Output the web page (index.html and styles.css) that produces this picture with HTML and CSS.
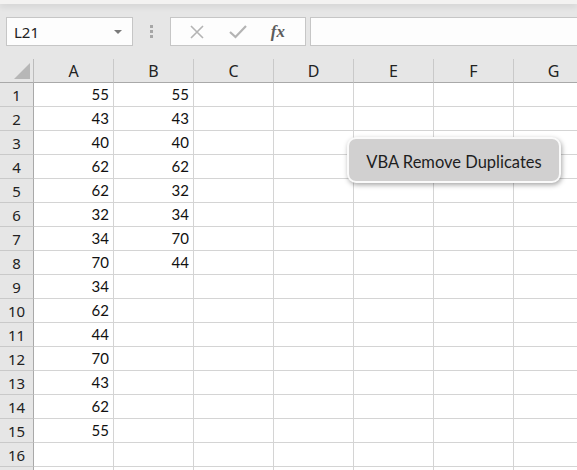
FILE: index.html
```html
<!DOCTYPE html>
<html lang="en">
<head>
    <meta charset="UTF-8">
    <meta name="viewport" content="width=device-width, initial-scale=1.0">
    <title>Remove Duplicates</title>
    <link rel="stylesheet" href="styles.css">
</head>
<body>
    <!-- Faixa superior da janela -->
    <div class="title-strip"></div>

    <!-- Caixa de nome e barra de fórmulas -->
    <div class="formula-row">
        <div class="name-box">
            <span>L21</span>
            <span class="caret"></span>
        </div>
        <div class="grip">
            <i></i><i></i><i></i>
        </div>
        <div class="fx-buttons">
            <svg width="16" height="16" viewBox="0 0 16 16">
                <path d="M2 2 L14 14 M14 2 L2 14" stroke="#b4b4b4" stroke-width="1.6" fill="none"/>
            </svg>
            <svg width="18" height="16" viewBox="0 0 18 16">
                <path d="M1 8 L6.5 13 L17 2" stroke="#b4b4b4" stroke-width="2.2" fill="none"/>
            </svg>
            <span class="fx">fx</span>
        </div>
        <div class="formula-input"></div>
    </div>

    <!-- Planilha -->
    <div class="sheet">
        <div class="grid" id="grid"></div>
        <button class="macro-btn">VBA Remove Duplicates</button>
    </div>

    <script>
        const colA = [55, 43, 40, 62, 62, 32, 34, 70, 34, 62, 44, 70, 43, 62, 55];
        const colB = [55, 43, 40, 62, 32, 34, 70, 44];
        const letters = ['A', 'B', 'C', 'D', 'E', 'F', 'G'];
        const grid = document.getElementById('grid');

        // linha de cabeçalho
        let html = '<div class="corner"><span class="tri"></span></div>';
        letters.forEach(l => html += `<div class="col-head">${l}</div>`);

        // a última linha fica cortada pela janela, sem número
        for (let r = 1; r <= 17; r++) {
            html += `<div class="row-head">${r < 17 ? r : ''}</div>`;
            letters.forEach((l, i) => {
                let v = '';
                if (i === 0 && colA[r - 1] !== undefined) v = colA[r - 1];
                if (i === 1 && colB[r - 1] !== undefined) v = colB[r - 1];
                html += `<div class="cell">${v}</div>`;
            });
        }
        grid.innerHTML = html;
    </script>
</body>
</html>
```

FILE: styles.css
```css
* {
    margin: 0;
    padding: 0;
    box-sizing: border-box;
}

body {
    background-color: #e6e6e6;
    font-family: 'Noto Sans', sans-serif;
    color: #222;
    overflow: hidden;
    width: 577px;
    height: 470px;
}

.title-strip {
    height: 4px;
    background-color: #f3f2f1;
    box-shadow: 0 2px 6px rgba(0, 0, 0, 0.12);
    position: relative;
}

/* Barra de fórmulas */
.formula-row {
    display: flex;
    align-items: center;
    height: 29px;
    margin: 13px 0 13px 6px;
}

.name-box {
    width: 127px;
    height: 29px;
    background-color: #fdfdfd;
    border: 1px solid #c6c6c6;
    display: flex;
    align-items: center;
    justify-content: space-between;
    padding: 0 10px 0 7px;
    font-size: 15px;
    color: #222;
}

.caret {
    width: 0;
    height: 0;
    border-left: 4px solid transparent;
    border-right: 4px solid transparent;
    border-top: 4px solid #7a7a7a;
}

.grip {
    width: 37px;
    display: flex;
    flex-direction: column;
    align-items: center;
    gap: 2px;
}

.grip i {
    width: 3px;
    height: 3px;
    background-color: #a6a6a6;
}

.fx-buttons {
    width: 136px;
    height: 29px;
    background-color: #fdfdfd;
    border: 1px solid #c6c6c6;
    display: flex;
    align-items: center;
    justify-content: space-around;
    padding: 0 8px 0 6px;
}

.fx {
    font-family: 'Liberation Serif', serif;
    font-style: italic;
    font-weight: bold;
    font-size: 17px;
    color: #5c5c5c;
}

.formula-input {
    flex: 1;
    height: 29px;
    margin-left: 4px;
    background-color: #fdfdfd;
    border: 1px solid #c6c6c6;
    border-right: none;
}

/* Planilha */
.sheet {
    position: relative;
    background-color: #fff;
    height: 411px;
}

.grid {
    display: grid;
    grid-template-columns: 34px repeat(7, 80px);
    grid-auto-rows: 24px;
    width: 594px;
}

.corner,
.col-head {
    background-color: #e6e6e6;
    border-bottom: 1px solid #a9a9a9;
}

.corner {
    border-right: 1px solid #bcbcbc;
    position: relative;
}

.tri {
    position: absolute;
    left: 14px;
    top: 4px;
    width: 0;
    height: 0;
    border-left: 16px solid transparent;
    border-bottom: 16px solid #b7b7b7;
}

.col-head {
    border-right: 1px solid #c9c9c9;
    font-size: 16px;
    display: flex;
    align-items: center;
    justify-content: center;
    padding-top: 1px;
    color: #222;
}

.row-head {
    background-color: #e6e6e6;
    border-right: 1px solid #a9a9a9;
    border-bottom: 1px solid #c9c9c9;
    font-size: 15px;
    display: flex;
    align-items: center;
    justify-content: center;
    color: #222;
}

.cell {
    border-right: 1px solid #d4d4d4;
    border-bottom: 1px solid #d4d4d4;
    font-family: 'Lato', sans-serif;
    font-size: 15px;
    color: #111;
    display: flex;
    align-items: flex-end;
    justify-content: flex-end;
    padding: 0 4px 3px 0;
    line-height: 18px;
}

/* Botão da macro */
.macro-btn {
    position: absolute;
    left: 347px;
    top: 78px;
    width: 214px;
    height: 46px;
    padding-top: 3px;
    background-color: #d1d0d0;
    border: 2px solid #fafafa;
    border-radius: 9px;
    box-shadow: 1px 2px 5px rgba(0, 0, 0, 0.35);
    font-family: 'Lato', sans-serif;
    font-size: 16.5px;
    color: #1e1e1e;
    cursor: pointer;
}
```
